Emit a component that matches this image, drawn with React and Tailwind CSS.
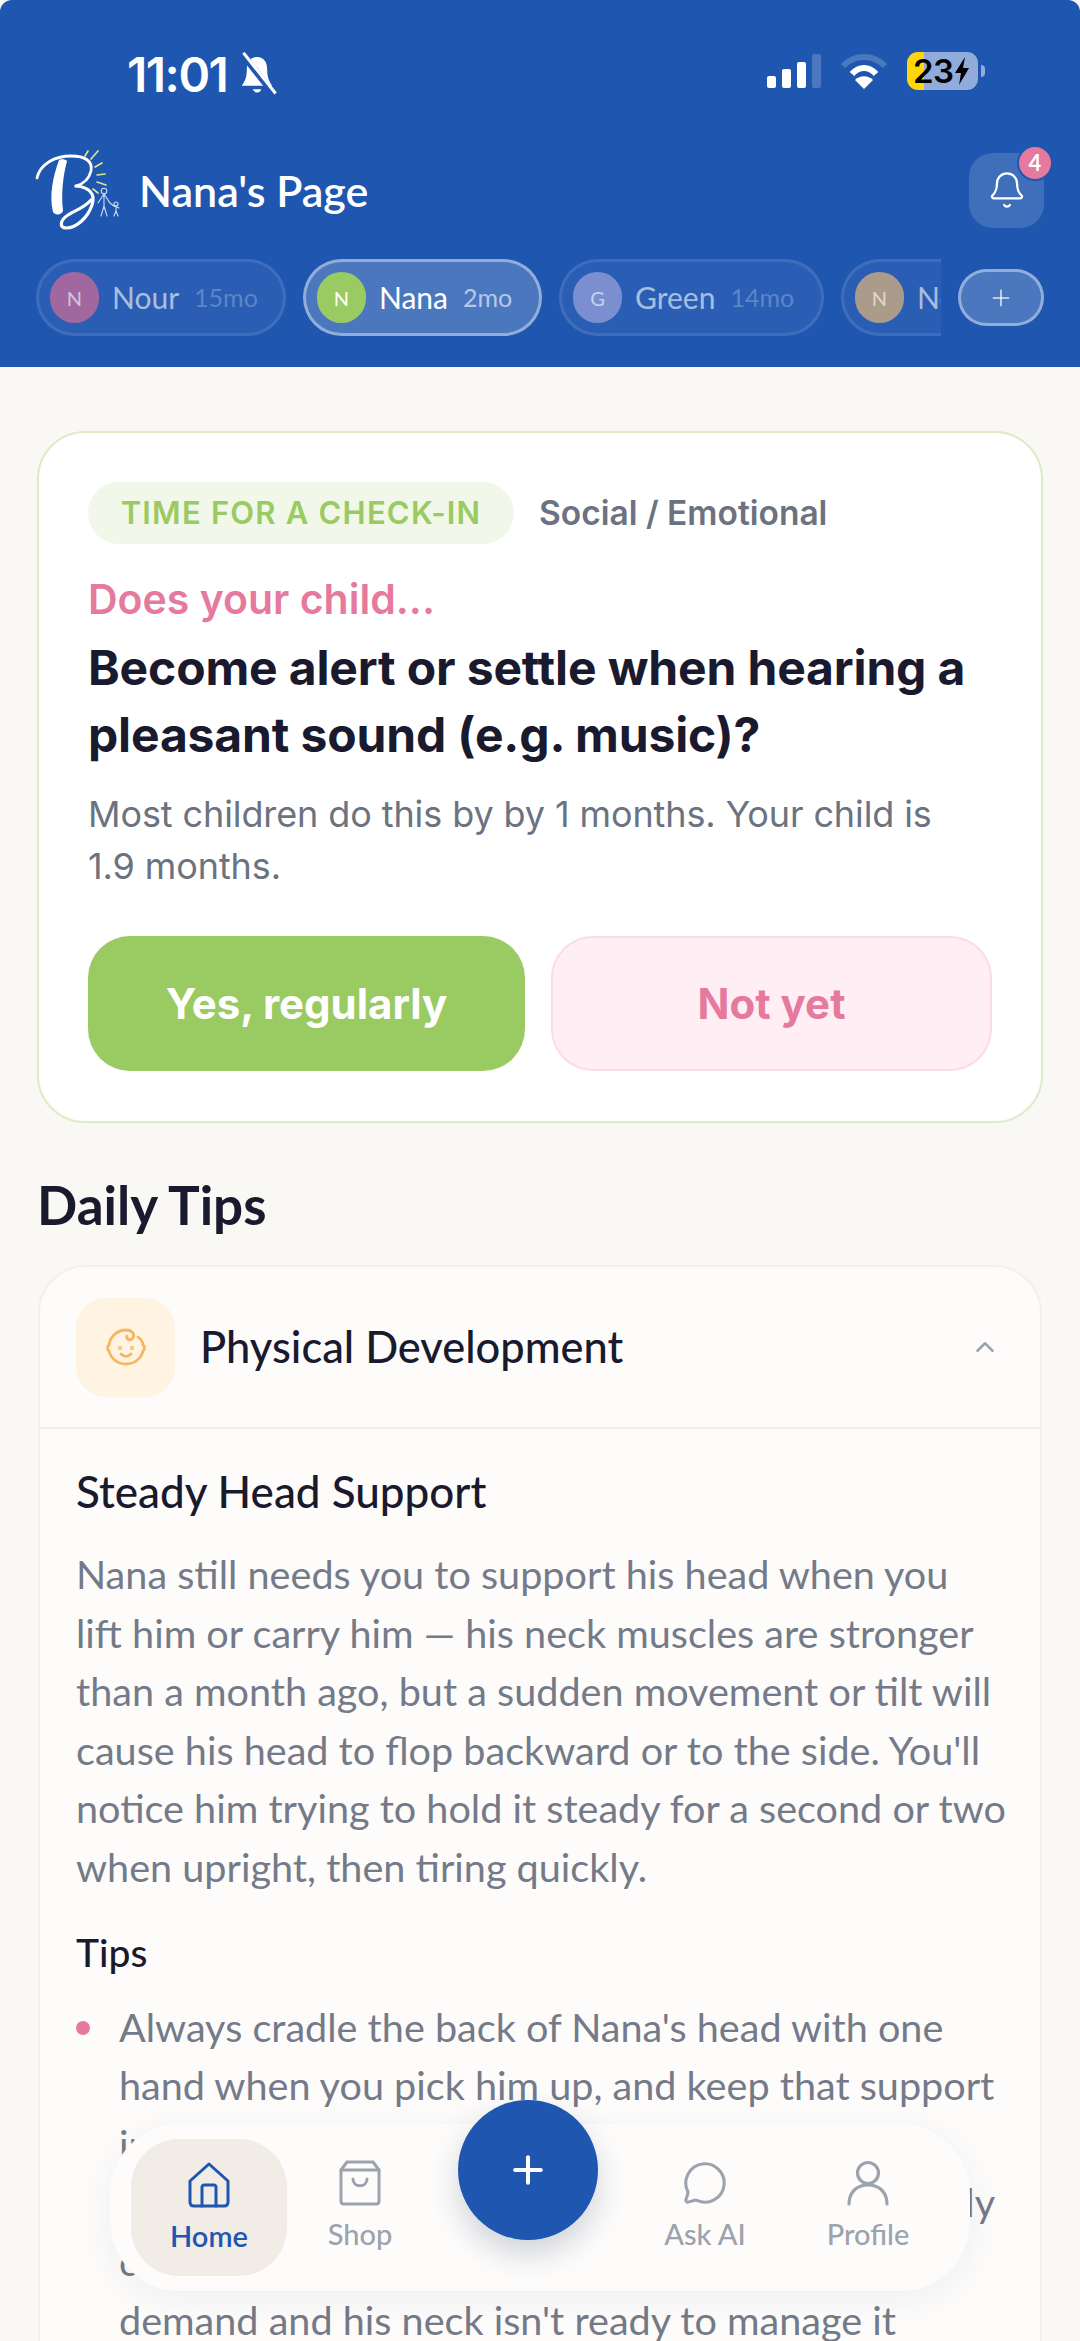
import React from 'react';
import { ChevronUp, MessageCircle, Plus, Bell } from 'lucide-react';

const nunito = { fontFamily: '"Lato", "Open Sans", sans-serif' };

const chips = [
  { name: 'Nour', age: '15mo', letter: 'N', color: 'bg-[#a0689f]', width: 'w-[250px]' },
  { name: 'Nana', age: '2mo', letter: 'N', color: 'bg-[#9aca62]', width: 'w-[239px]', active: true },
  { name: 'Green', age: '14mo', letter: 'G', color: 'bg-[#7b8fd0]', width: 'w-[265px]' },
  { name: 'Nova', age: '9mo', letter: 'N', color: 'bg-[#ac9a8b]', width: 'w-[265px]' },
];

function Logo() {
  return (
    <svg width="90" height="84" viewBox="0 0 90 84" fill="none" className="shrink-0">
      <path d="M2 30C5 16 20 8 36 8C50 8 58 13 56 23C54 31 48 36 41 38" stroke="white" strokeWidth="2.8" strokeLinecap="round" />
      <path d="M24 12C25 11 31 11 32 13C28 28 26 46 28 62C28 67 20 68 18 64C14 48 18 28 24 12Z" fill="white" />
      <path d="M41 38C54 39 61 46 57 57C53 69 42 80 31 80C24 80 25 72 33 67C40 62 48 61 56 52" stroke="white" strokeWidth="3.2" strokeLinecap="round" />
      <path d="M50 8L53 3M56 11L63 3M60 19L67 15M62 27L70 26M62 34L71 37M58 41L63 45" stroke="#d6e58e" strokeWidth="1.7" strokeLinecap="round" />
      <g stroke="#cfdcf2" strokeWidth="1.1" strokeLinecap="round">
        <circle cx="69" cy="43" r="2.8" />
        <path d="M69 46V58M69 46L63 55M69 46L75 55L79 58M69 58L66 68M69 58L72 68" />
        <circle cx="81" cy="56" r="2" />
        <path d="M81 58V63M79 58L84 60M81 63L79 68M81 63L83 68" />
      </g>
    </svg>
  );
}

function StatusBar() {
  return (
    <div className="flex h-[100px] items-end pl-[127px] text-white">
      <span className="text-[48px] font-semibold leading-[50px] tracking-[-1.5px]" style={{ fontFamily: '"Inter", sans-serif' }}>11:01</span>
      <svg width="42" height="44" viewBox="0 0 24 26" className="mb-[4px] ml-[9px]">
        <path d="M12 3C8 3 6 6 6 10C6 15 5 17 3 20H21C19 17 18 15 18 10C18 6 16 3 12 3Z" fill="white" />
        <path d="M9.5 22A2.6 2.6 0 0 0 14.5 22Z" fill="white" />
        <path d="M3 1L22 25" stroke="#1e56b0" strokeWidth="3.8" />
        <path d="M4 0.5L23 24.5" stroke="white" strokeWidth="1.8" />
      </svg>
      <div className="ml-auto mr-[95px] flex items-center">
        <div className="mb-[11px] flex items-end gap-[6px]">
          <div className="h-[12px] w-[9px] rounded-[2px] bg-white" />
          <div className="h-[19px] w-[9px] rounded-[2px] bg-white" />
          <div className="h-[26px] w-[9px] rounded-[2px] bg-white" />
          <div className="h-[34px] w-[9px] rounded-[2px] bg-white/20" />
        </div>
        <svg width="50" height="36" viewBox="0 0 50 36" fill="none" className="mb-[10px] ml-[18px]">
          <path d="M4 13C16 1 34 1 46 13" stroke="white" strokeOpacity="0.2" strokeWidth="6" />
          <path d="M13 21C20 13 30 13 37 21" stroke="white" strokeWidth="6" />
          <path d="M25 36L16 27C21 22 29 22 34 27Z" fill="white" />
        </svg>
        <div className="mb-[10px] ml-[18px] flex h-[38px] w-[71px] items-center overflow-hidden rounded-[11px] bg-[#91abdb]" style={{ backgroundImage: 'linear-gradient(90deg, #ffd60a 17px, #91abdb 17px)' }}>
          <span className="pl-[6px] text-[33px] font-semibold leading-none tracking-[-0.5px] text-black" style={{ fontFamily: '"Inter", sans-serif' }}>23</span>
          <svg width="16" height="28" viewBox="0 0 16 28">
            <path d="M11 0L1 16H7L5 28L15 11H9Z" fill="black" />
          </svg>
        </div>
        <div className="mb-[10px] ml-[3px] h-[12px] w-[4px] rounded-r-full bg-[#91abdb]" />
      </div>
    </div>
  );
}

function Chip({ name, age, letter, color, width, active }) {
  return (
    <div
      className={`flex h-[77px] shrink-0 items-center rounded-full border-[3px] pl-[11px] ${width} ${
        active ? 'border-white/40 bg-white/20' : 'border-white/10 bg-white/5'
      }`}
    >
      <div className={`flex h-[51px] w-[49px] shrink-0 items-center justify-center rounded-full text-[20px] ${color} ${active ? 'text-white' : 'text-white/60'}`}>
        {letter}
      </div>
      <span className={`ml-[13px] text-[30px] ${active ? 'text-white' : 'text-white/60'}`}>{name}</span>
      <span className={`ml-[15px] text-[25px] ${active ? 'text-white/60' : 'text-white/25'}`}>{age}</span>
    </div>
  );
}

function Header() {
  return (
    <div className="h-[367px] shrink-0 rounded-t-[12px] bg-[#1e56b0]" style={nunito}>
      <StatusBar />
      <div className="mt-[48px] flex h-[84px] items-center pl-[35px] pr-[36px]">
        <Logo />
        <span className="ml-[14px] text-[43px] font-semibold leading-none text-white">Nana's Page</span>
        <div className="relative ml-auto flex h-[75px] w-[75px] items-center justify-center rounded-[24px] bg-white/15">
          <Bell size={40} strokeWidth={1.4} className="text-white" />
          <div className="absolute right-[-9px] top-[-8px] flex h-[36px] w-[36px] items-center justify-center rounded-full border-[2px] border-[#1e56b0] bg-[#e57a9e] text-[22px] font-bold text-white">
            4
          </div>
        </div>
      </div>
      <div className="mt-[27px] flex items-center pl-[36px] pr-[36px]">
        <div className="flex w-[905px] gap-[17px] overflow-hidden">
          {chips.map((c) => (
            <Chip key={c.name} {...c} />
          ))}
        </div>
        <div className="ml-[17px] flex h-[57px] w-[86px] items-center justify-center rounded-full border-[3px] border-white/40 bg-white/20">
          <Plus size={26} strokeWidth={1.5} className="text-white/80" />
        </div>
      </div>
    </div>
  );
}

function CheckIn() {
  return (
    <div className="mx-[37px] mt-[64px] h-[692px] shrink-0 rounded-[48px] border-[2px] border-[#dcecc4] bg-white px-[49px] pt-[49px]" style={{ fontFamily: '"Inter", sans-serif' }}>
      <div className="flex items-center">
        <div className="flex h-[62px] w-[426px] items-center justify-center rounded-full bg-[#f1f8e9] text-[31px] font-semibold tracking-[1.2px] text-[#9aca62]">
          TIME FOR A CHECK-IN
        </div>
        <span className="ml-[25px] text-[33.5px] font-semibold text-[#6b7280]">Social / Emotional</span>
      </div>
      <div className="mt-[31px] text-[41px] font-semibold leading-[48px] text-[#e57a9e]">Does your child...</div>
      <div className="mt-[11px] text-[48px] font-bold leading-[67px] tracking-[-0.15px] text-[#1a1a2e]">
        Become alert or settle when hearing a
        <br />
        pleasant sound (e.g. music)?
      </div>
      <div className="mt-[20px] text-[36px] leading-[52px] tracking-[-0.1px] text-[#6b7280]">
        Most children do this by by 1 months. Your child is
        <br />
        1.9 months.
      </div>
      <div className="mt-[44px] flex gap-[26px]">
        <div className="flex h-[135px] w-[437px] items-center justify-center rounded-[42px] bg-[#9aca62] text-[42px] font-bold text-white">
          Yes, regularly
        </div>
        <div className="flex h-[135px] w-[441px] items-center justify-center rounded-[42px] border-[2px] border-[#fbdce6] bg-[#ffeef3] text-[42px] font-bold text-[#e57a9e]">
          Not yet
        </div>
      </div>
    </div>
  );
}

function BabyIcon() {
  return (
    <svg width="40" height="40" viewBox="0 0 40 40" fill="none" stroke="#f6b561" strokeWidth="2.8" strokeLinecap="round" strokeLinejoin="round">
      <path d="M32 10C36 13 37 16 37 18C39 19 39 22 37 24C35 32 28 37 20 37C12 37 5 32 3 24C1 22 1 19 3 18C4 9 12 3 20 3C26 3 29 7 27 11C25 14 20 13 21 9" />
      <circle cx="14" cy="21" r="0.6" />
      <circle cx="26" cy="21" r="0.6" />
      <path d="M15 27C18 30 22 30 25 27" />
    </svg>
  );
}

function Tips() {
  return (
    <div className="shrink-0" style={nunito}>
      <div className="ml-[37px] mt-[54px] text-[53px] font-bold leading-[56px] text-[#1a1a2e]">Daily Tips</div>
      <div className="mx-[38px] mt-[32px] h-[1200px] rounded-[48px] border-[2px] border-[#f2f0ec] bg-[#fdfcfb]">
        <div className="flex h-[162px] items-center border-b-[2px] border-[#f2f0ec] pl-[36px] pr-[42px]">
          <div className="flex h-[99px] w-[99px] items-center justify-center rounded-[30px] bg-[#fff3e2]">
            <BabyIcon />
          </div>
          <span className="ml-[25px] text-[43.4px] font-medium text-[#1a1a2e]">Physical Development</span>
          <ChevronUp size={30} strokeWidth={2} className="ml-auto mr-[-2px] text-[#9ca3af]" />
        </div>
        <div className="pl-[36px] pt-[37px]">
          <div className="text-[44px] font-medium leading-[50px] text-[#1a1a2e]">Steady Head Support</div>
          <div className="mt-[29px] whitespace-nowrap text-[39.6px] leading-[58.6px] text-[#747a88]">
            Nana still needs you to support his head when you
            <br />
            lift him or carry him — his neck muscles are stronger
            <br />
            than a month ago, but a sudden movement or tilt will
            <br />
            cause his head to flop backward or to the side. You'll
            <br />
            notice him trying to hold it steady for a second or two
            <br />
            when upright, then tiring quickly.
          </div>
          <div className="mt-[30px] text-[39px] font-medium leading-[50px] text-[#1a1a2e]">Tips</div>
          <div className="mt-[21px] flex">
            <div className="mt-[23px] h-[14px] w-[14px] shrink-0 rounded-full bg-[#e57a9e]" />
            <div className="ml-[29px] whitespace-nowrap text-[39.6px] leading-[58.6px] text-[#747a88]">
              Always cradle the back of Nana's head with one
              <br />
              hand when you pick him up, and keep that support
              <br />
              in place until he is resting on your shoulder.
              <br />
              <span className="tracking-[0.2px]">Pulling him up by the arms or rising far too quickly</span>
              <br />
              can strain him, because it places sudden
              <br />
              demand and his neck isn't ready to manage it
            </div>
          </div>
        </div>
      </div>
    </div>
  );
}

function NavItem({ label, active, children, className }) {
  return (
    <div className={`flex flex-col items-center ${className} ${active ? 'text-[#1e56b0]' : 'text-[#9ca3af]'}`}>
      {children}
      <span className={`mt-[10px] whitespace-nowrap text-[29px] leading-[36px] ${active ? 'font-semibold' : 'font-medium'}`}>{label}</span>
    </div>
  );
}

function BottomNav() {
  return (
    <div className="absolute left-[110px] top-[2124px] flex h-[167px] w-[860px] items-center rounded-[70px] bg-[#fdfcfb] shadow-[0_8px_40px_rgba(30,40,70,0.06)]" style={nunito}>
      <div className="ml-[21px] flex h-[137px] w-[156px] items-center justify-center rounded-[48px] bg-[#f1ece5]">
        <NavItem label="Home" active>
          <svg width="44" height="46" viewBox="0 0 44 46" fill="none" stroke="currentColor" strokeWidth="3" strokeLinejoin="round" strokeLinecap="round">
            <path d="M3 19L22 2L41 19V40C41 43 39 44 37 44H7C5 44 3 43 3 40Z" />
            <path d="M15 44V25C15 24 16 23 17 23H27C28 23 29 24 29 25V44" />
          </svg>
        </NavItem>
      </div>
      <NavItem label="Shop" className="absolute left-[210px] top-[36px] w-[80px]">
        <svg width="44" height="46" viewBox="0 0 44 46" fill="none" stroke="currentColor" strokeWidth="3" strokeLinejoin="round" strokeLinecap="round">
          <path d="M9 2H35L41 10V41C41 43 40 44 38 44H6C4 44 3 43 3 41V10Z" />
          <path d="M3 10H41" />
          <path d="M15 19C15 28 29 28 29 19" />
        </svg>
      </NavItem>
      <NavItem label="Ask AI" className="absolute left-[555px] top-[36px] w-[80px]">
        <MessageCircle size={46} strokeWidth={1.6} />
      </NavItem>
      <NavItem label="Profile" className="absolute left-[718px] top-[36px] w-[80px]">
        <svg width="46" height="46" viewBox="0 0 46 46" fill="none" stroke="currentColor" strokeWidth="3.2" strokeLinecap="round">
          <circle cx="23" cy="13" r="10.5" />
          <path d="M4 44C4 32 12 25 23 25C34 25 42 32 42 44" />
        </svg>
      </NavItem>
      <div className="absolute left-[348px] top-[-24px] flex h-[140px] w-[140px] items-center justify-center rounded-full bg-[#1e56b0] shadow-[0_14px_30px_rgba(30,50,90,0.2)]">
        <Plus size={44} strokeWidth={2.2} className="text-white" />
      </div>
    </div>
  );
}

export default function App() {
  return (
    <div className="relative flex h-[2341px] w-[1080px] flex-col overflow-hidden bg-[#f9f8f5]">
      <Header />
      <CheckIn />
      <Tips />
      <BottomNav />
    </div>
  );
}
